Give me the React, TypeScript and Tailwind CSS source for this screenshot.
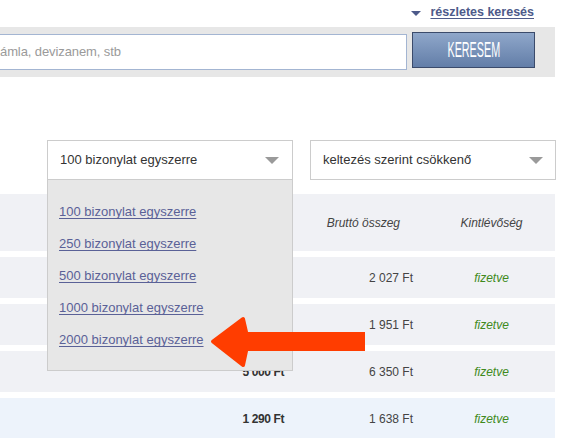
import React from "react";

const font = { fontFamily: '"Liberation Sans", Arial, sans-serif' };

function Caret({ color = "#9a9a9a" }: { color?: string }) {
  return (
    <svg width="14" height="7" viewBox="0 0 14 7" className="block">
      <polygon points="0,0 14,0 7,7" fill={color} />
    </svg>
  );
}

const pageSizes = [
  "100 bizonylat egyszerre",
  "250 bizonylat egyszerre",
  "500 bizonylat egyszerre",
  "1000 bizonylat egyszerre",
  "2000 bizonylat egyszerre",
];

const rows = [
  { net: "2 000 Ft", gross: "2 027 Ft", bg: "bg-[#f0f1f5]" },
  { net: "1 540 Ft", gross: "1 951 Ft", bg: "bg-[#f0f1f5]" },
  { net: "5 000 Ft", gross: "6 350 Ft", bg: "bg-[#f0f1f5]" },
  { net: "1 290 Ft", gross: "1 638 Ft", bg: "bg-[#edf3fb]" },
];

export default function App() {
  return (
    <div
      className="relative w-[570px] h-[438px] overflow-hidden bg-white"
      style={font}
    >
      {/* advanced search toggle */}
      <div className="h-[27px] flex items-start justify-end pr-[36px] pt-[5px]">
        <a
          href="#"
          className="flex items-center gap-[9px] text-[12.5px] font-bold text-[#4d5a8a] leading-[15px]"
        >
          <svg width="10" height="5" viewBox="0 0 10 5" className="block mt-[1px]">
            <polygon points="0,0 10,0 5,5" fill="#4d5a8a" />
          </svg>
          <span className="underline underline-offset-2">részletes keresés</span>
        </a>
      </div>

      {/* search bar */}
      <div className="w-[555px] h-[50px] bg-[#e7e7e7] flex items-start">
        <div className="mt-[7px] w-[407px] h-[36px] bg-white border border-l-0 border-[#a3b5d2] flex items-center">
          <span className="text-[13px] text-[#9a9a9a] tracking-[-0.1px]">
            ámla, devizanem, stb
          </span>
        </div>
        <button className="ml-[5px] mt-[5px] w-[123px] h-[36px] border border-[#3b4b6b] bg-gradient-to-b from-[#8fa7ca] to-[#637ea8] flex items-center justify-center">
          <span className="inline-block text-white text-[22px] leading-none font-normal scale-x-[0.49]">
            KERESEM
          </span>
        </button>
      </div>

      {/* paging + ordering selects */}
      <div className="mt-[63px] pl-[47px] flex gap-[17px]">
        <div className="relative w-[246px]">
          <div className="h-[40px] border border-[#cccccc] bg-white flex items-center justify-between pl-[12px] pr-[13px]">
            <span className="text-[13px] text-[#333333]">100 bizonylat egyszerre</span>
            <Caret />
          </div>
          <div className="absolute left-0 top-[39px] w-full h-[192px] border border-[#cccccc] bg-[#e7e7e7] z-10 flex flex-col pt-[16px] pl-[11px]">
            {pageSizes.map((s) => (
              <a
                key={s}
                href="#"
                className="h-[32px] flex items-center text-[13px] text-[#5a6197] underline underline-offset-2"
              >
                {s}
              </a>
            ))}
          </div>
        </div>
        <div className="w-[246px] h-[40px] border border-[#cccccc] bg-white flex items-center justify-between pl-[12px] pr-[12px]">
          <span className="text-[13px] text-[#333333]">keltezés szerint csökkenő</span>
          <Caret />
        </div>
      </div>

      {/* invoice list */}
      <div className="mt-[14px] w-[555px] flex flex-col gap-[6px]">
        <div className="h-[57px] bg-[#f0f1f5] grid grid-cols-[284px_144px_127px] items-center text-[12px] italic text-[#444444]">
          <span />
          <span className="text-right pr-[28px]">Bruttó összeg</span>
          <span className="text-center">Kintlévőség</span>
        </div>
        {rows.map((r) => (
          <div
            key={r.gross}
            className={`h-[41px] ${r.bg} grid grid-cols-[284px_144px_127px] items-center text-[12px] text-[#444444]`}
          >
            <span className="text-right font-bold tracking-[-0.4px] text-[#333333]">{r.net}</span>
            <span className="text-right pr-[15px]">{r.gross}</span>
            <span className="text-center italic text-[#3f8a1c]">fizetve</span>
          </div>
        ))}
      </div>

      {/* callout arrow */}
      <svg
        className="absolute left-[208px] top-[314px] z-20"
        width="160"
        height="56"
        viewBox="0 0 160 56"
      >
        <polygon
          points="5,27.5 35,5 38,18 38,37 35,51"
          fill="#ff3d00"
          stroke="#ff3d00"
          strokeWidth="4"
          strokeLinejoin="round"
        />
        <rect x="37" y="18" width="120" height="19" fill="#ff3d00" />
      </svg>
    </div>
  );
}
